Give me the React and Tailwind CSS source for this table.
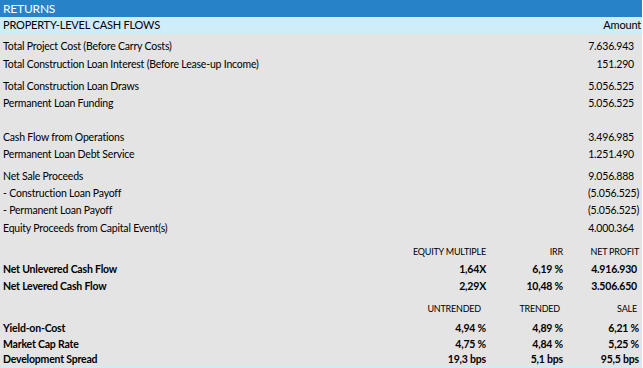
const topRows = [
  { spacer: 4 },
  { label: 'Total Project Cost (Before Carry Costs)', value: '7.636.943', h: 18 },
  { label: 'Total Construction Loan Interest (Before Lease-up Income)', value: '151.290', h: 18 },
  { spacer: 4 },
  { label: 'Total Construction Loan Draws', value: '5.056.525', h: 17 },
  { label: 'Permanent Loan Funding', value: '5.056.525', h: 18 },
  { spacer: 16 },
  { label: 'Cash Flow from Operations', value: '3.496.985', h: 17 },
  { label: 'Permanent Loan Debt Service', value: '1.251.490', h: 18 },
  { spacer: 4 },
  { label: 'Net Sale Proceeds', value: '9.056.888', h: 17 },
  { label: '- Construction Loan Payoff', value: '(5.056.525)', h: 17, paren: true },
  { label: '- Permanent Loan Payoff', value: '(5.056.525)', h: 18, paren: true },
  { label: 'Equity Proceeds from Capital Event(s)', value: '4.000.364', h: 18 },
];

function Row({ label, value, h, paren }) {
  return (
    <div className="flex items-center justify-between pl-[3px]" style={{ height: h }}>
      <span>{label}</span>
      <span className={paren ? 'pr-[3px]' : 'pr-[8px]'}>{value}</span>
    </div>
  );
}

function Cells({ a, b, c, head }) {
  return (
    <>
      <span className={`w-[77px] text-right ${head ? 'text-[9px]' : ''}`}>{a}</span>
      <span className={`w-[77px] text-right ${head ? 'text-[9px]' : ''}`}>{b}</span>
      <span className={`w-[76px] text-right ${head ? 'text-[9px]' : ''}`}>{c}</span>
    </>
  );
}

export default function App() {
  return (
    <div className="w-[643px] h-[368px] bg-white overflow-hidden text-black text-[10.5px] tracking-[-0.2px]" style={{ fontFamily: 'Lato, "Liberation Sans", sans-serif' }}>
      <div className="w-[642px] h-full flex flex-col">
        <div className="h-[17px] shrink-0 bg-[#2782c7] text-white text-[12px] flex items-center pl-[3px]">RETURNS</div>
        <div className="h-[17px] shrink-0 bg-[#cfecf9] text-[11px] flex items-end justify-between pl-[3px] pr-[1px] pb-[1px]">
          <span>PROPERTY-LEVEL CASH FLOWS</span>
          <span>Amount</span>
        </div>
        <div className="h-[332px] shrink-0 bg-[#e4e4e4] flex flex-col">
          {topRows.map((r, i) =>
            r.spacer ? <div key={i} style={{ height: r.spacer }} /> : <Row key={i} {...r} />
          )}

          <div className="h-[5px]" />
          <div className="h-[18px] flex items-center pr-[3px]">
            <span className="flex-1" />
            <Cells head a="EQUITY MULTIPLE" b="IRR" c="NET PROFIT" />
          </div>
          <div className="h-[17px] flex items-center pl-[3px] pr-[3px] font-bold">
            <span className="flex-1">Net Unlevered Cash Flow</span>
            <Cells a="1,64X" b="6,19 %" c={<span className="pr-[2px]">4.916.930</span>} />
          </div>
          <div className="h-[18px] flex items-center pl-[3px] pr-[3px] font-bold">
            <span className="flex-1">Net Levered Cash Flow</span>
            <Cells a="2,29X" b="10,48 %" c={<span className="pr-[2px]">3.506.650</span>} />
          </div>

          <div className="h-[4px]" />
          <div className="h-[18px] flex items-center pr-[3px]">
            <span className="flex-1" />
            <Cells head a={<span className="pr-[5px]">UNTRENDED</span>} b={<span className="pr-[3px]">TRENDED</span>} c={<span className="pr-[2px]">SALE</span>} />
          </div>
          <div className="h-[3px]" />
          <div className="h-[15px] flex items-center pl-[3px] pr-[3px] font-bold">
            <span className="flex-1">Yield-on-Cost</span>
            <Cells a="4,94 %" b="4,89 %" c="6,21 %" />
          </div>
          <div className="h-[17px] flex items-center pl-[3px] pr-[3px] font-bold">
            <span className="flex-1">Market Cap Rate</span>
            <Cells a="4,75 %" b="4,84 %" c="5,25 %" />
          </div>
          <div className="h-[13px] flex items-center pl-[3px] pr-[3px] pt-[1px] font-bold">
            <span className="flex-1">Development Spread</span>
            <Cells a="19,3 bps" b="5,1 bps" c="95,5 bps" />
          </div>
        </div>
        <div className="h-[2px] shrink-0 bg-[#cfecf9]" />
      </div>
    </div>
  );
}
